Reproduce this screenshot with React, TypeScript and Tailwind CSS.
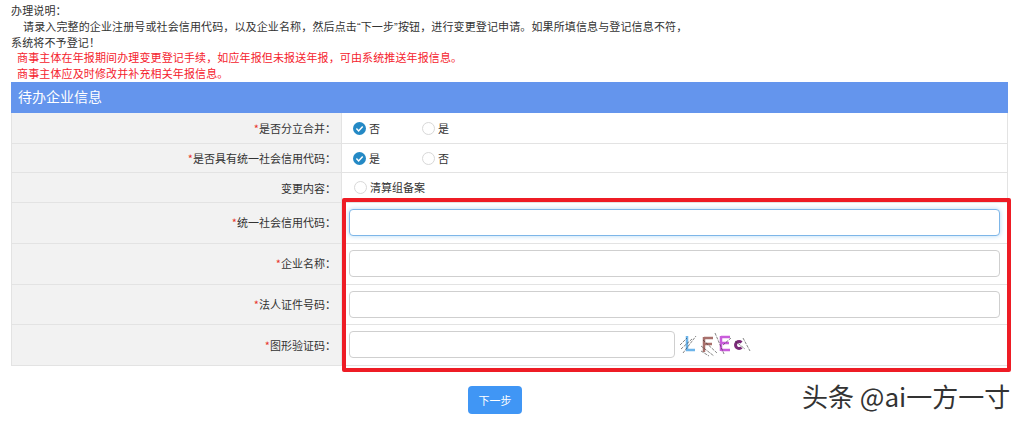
import React from 'react';

const Radio = ({ checked = false, label, className = '' }: { checked?: boolean; label: string; className?: string }) => (
  <span className={`flex items-center ${className}`}>
    {checked ? (
      <svg width="13" height="13" viewBox="0 0 13 13" className="shrink-0">
        <circle cx="6.5" cy="6.5" r="6.5" fill="#2489c5" />
        <path d="M3.4 6.6 L5.6 8.9 L9.7 4.5" fill="none" stroke="#fff" strokeWidth="1.5" />
      </svg>
    ) : (
      <span className="w-[13px] h-[13px] shrink-0 rounded-full border border-[#d8d8d8] bg-white"></span>
    )}
    <span className="ml-[3px]">{label}</span>
  </span>
);

const Row = ({ label, required = false, className, labelClass = 'pt-[1px]', children }: { label: string; required?: boolean; className: string; labelClass?: string; children: React.ReactNode }) => (
  <div className={`flex border-b border-[#e3e3e3] ${className}`}>
    <div className={`w-[331px] shrink-0 flex items-center justify-end pr-[5px] bg-[#f2f2f2] border-r border-[#e3e3e3] border-l ${labelClass}`}>
      {required && <span className="text-[#e8332e]">*</span>}
      {label}：
    </div>
    <div className="flex-1 min-w-0 flex items-center">{children}</div>
  </div>
);

const TextInput = ({ focused = false, className = '' }: { focused?: boolean; className?: string }) => (
  <input
    className={`h-[27px] mb-[1px] rounded-[4px] bg-white outline-none border ${
      focused ? 'border-[#7db6e8] shadow-[0_0_5px_#b5d9f5]' : 'border-[#cfcfcf]'
    } ${className}`}
  />
);

const Captcha = () => (
  <svg width="76" height="26" viewBox="0 0 76 26" className="ml-[4px] shrink-0">
    <path d="M8 4 L8 18 L16 18" fill="none" stroke="#6cb4ea" strokeWidth="2.5" />
    <path d="M25 5 L25 20 M25 6 L34 6 M25 12 L33 12" fill="none" stroke="#a8706c" strokeWidth="2.5" />
    <path d="M42 4 L42 19 M42 5 L51 5 M42 11 L50 11 M42 18 L51 18" fill="none" stroke="#c95ddb" strokeWidth="2.5" />
    <path d="M62.5 10.5 A3.5 3.5 0 1 0 62.5 15.5" fill="none" stroke="#7a2a78" strokeWidth="3" />
    <path d="M2 17 L13 7 M4 21 L17 4 M1 13 L8 6 M22 14 L35 24 M24 8 L38 21 M22 19 L30 24 M36 1 L45 22 M44 13 L52 6 M64 6 L71 19 M56 9 L66 17" fill="none" stroke="#333" strokeWidth="0.6" strokeDasharray="3 1" />
  </svg>
);

const App: React.FC = () => {
  return (
    <div className="relative w-[1024px] h-[423px] overflow-hidden bg-white text-[#333] text-[11px] leading-[15px]" style={{ fontFamily: '"Noto Sans CJK SC", "Liberation Sans", sans-serif' }}>
      <div className="pl-[11px] pt-[3px] h-[82px] tracking-[0.13px]">
        <p>办理说明：</p>
        <p className="pl-[12px] pt-[1px] whitespace-nowrap">
          请录入完整的企业注册号或社会信用代码，以及企业名称，然后点击<span className="font-['Liberation_Sans']">“</span>下一步<span className="font-['Liberation_Sans']">”</span>按钮，进行变更登记申请。如果所填信息与登记信息不符，
        </p>
        <p>系统将不予登记！</p>
        <p className="pl-[6px] text-[#f5222d]">商事主体在年报期间办理变更登记手续，如应年报但未报送年报，可由系统推送年报信息。</p>
        <p className="pl-[6px] pt-[1px] text-[#f5222d]">商事主体应及时修改并补充相关年报信息。</p>
      </div>

      <div className="mx-[11px] w-[997px]">
        <div className="h-[31px] flex items-center pl-[7px] pb-[2px] bg-[#6495ed] text-white text-[14px]">待办企业信息</div>
        <div className="border-r border-[#e3e3e3]">
          <Row label="是否分立合并" required className="h-[31px]">
            <Radio checked label="否" className="ml-[11px] w-[69px]" />
            <Radio label="是" />
          </Row>
          <Row label="是否具有统一社会信用代码" required className="h-[29px]">
            <Radio checked label="是" className="ml-[11px] w-[69px]" />
            <Radio label="否" />
          </Row>
          <Row label="变更内容" className="h-[30px]">
            <Radio label="清算组备案" className="ml-[12px]" />
          </Row>
          <Row label="统一社会信用代码" required labelClass="pb-[1px]" className="h-[41px]">
            <TextInput focused className="ml-[7px] w-[651px]" />
          </Row>
          <Row label="企业名称" required labelClass="pb-[1px]" className="h-[41px]">
            <TextInput className="ml-[7px] w-[651px]" />
          </Row>
          <Row label="法人证件号码" required labelClass="pb-[1px]" className="h-[40px]">
            <TextInput className="ml-[7px] w-[651px]" />
          </Row>
          <Row label="图形验证码" required className="h-[41px]">
            <TextInput className="ml-[7px] w-[326px]" />
            <Captcha />
          </Row>
        </div>
        <div className="flex justify-center pt-[20px] pr-[29px]">
          <button className="w-[54px] h-[28px] rounded-[4px] bg-[#4096f5] text-white text-[11px]">下一步</button>
        </div>
      </div>

      {/* red annotation drawn over the form */}
      <div className="absolute left-[342px] top-[198px] w-[669px] h-[174px] border-4 border-[#ee1c25] rounded-[2px]"></div>
      <div className="absolute left-[802px] top-[379px] text-[26px] leading-[34px] text-[#333] whitespace-nowrap">头条 @ai一方一寸</div>
    </div>
  );
};

export default App;
